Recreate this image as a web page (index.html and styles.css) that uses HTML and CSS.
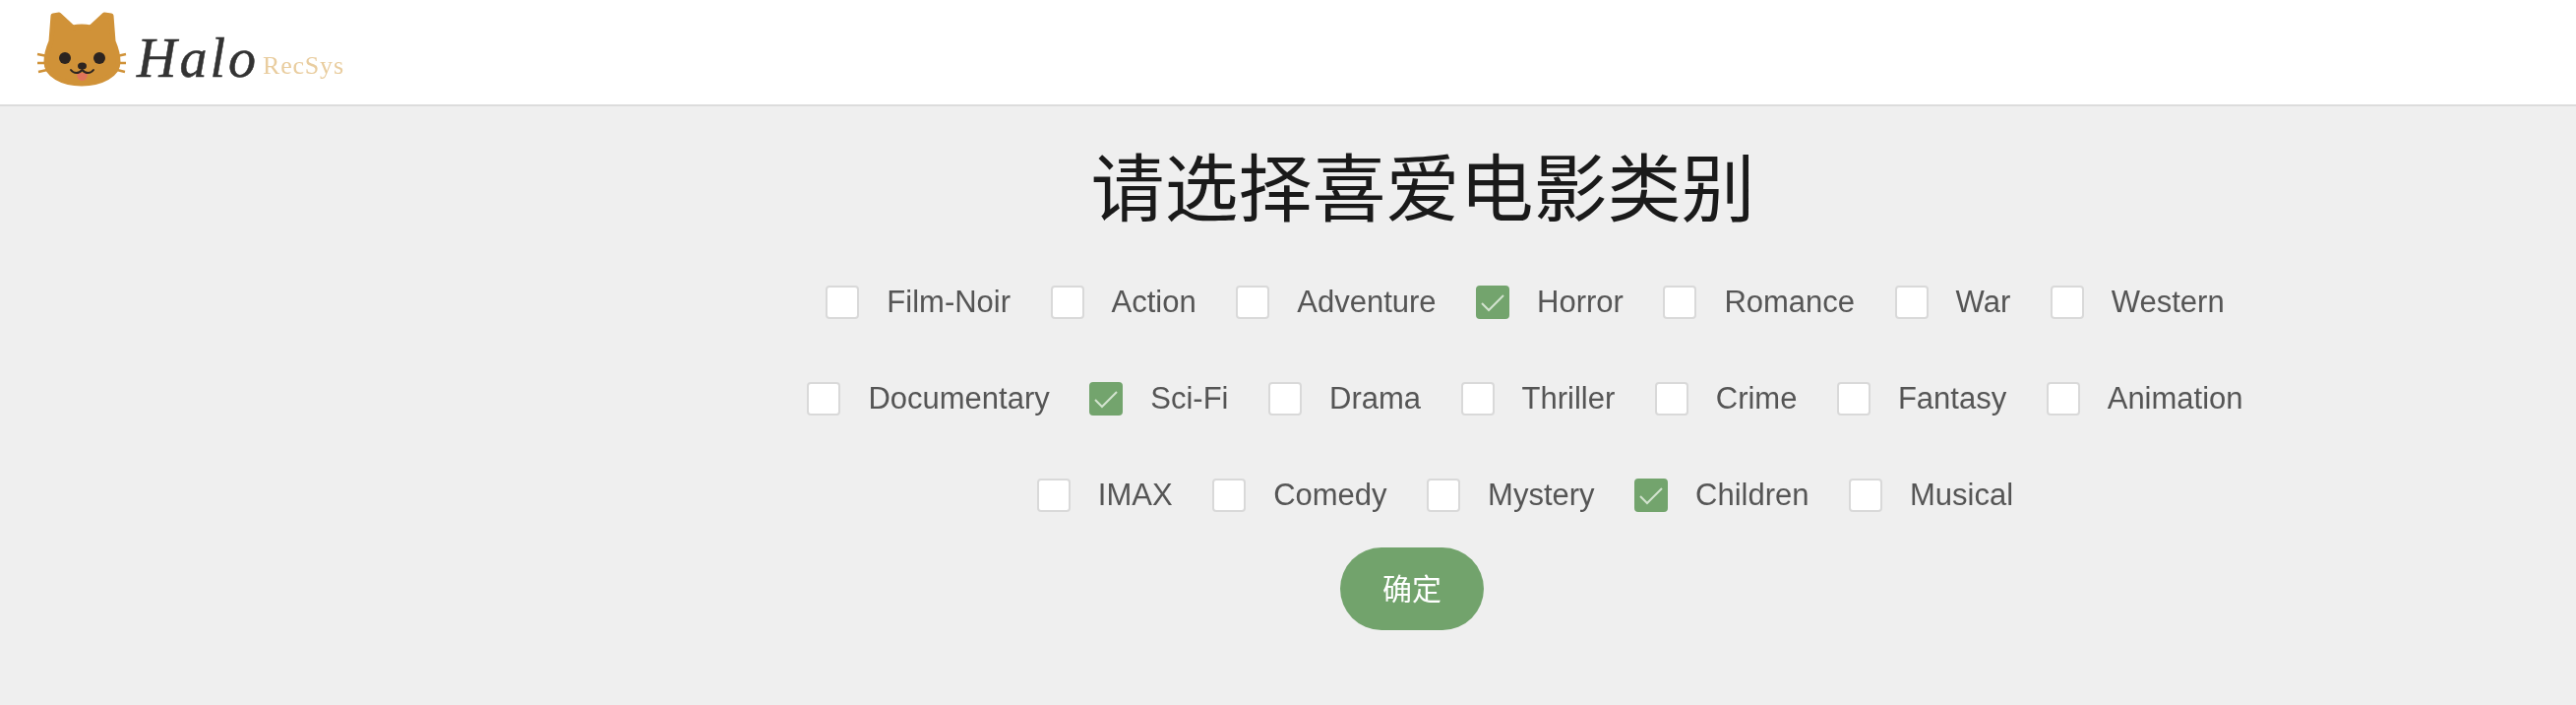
FILE: index.html
```html
<!DOCTYPE html>
<html lang="zh-CN">
<head>
<meta charset="utf-8">
<title>Halo RecSys</title>
<link rel="stylesheet" href="styles.css">
</head>
<body>
<header class="header">
  <div class="logo">
    <svg class="cat" viewBox="36 10 94 80" aria-hidden="true">
      <g class="whiskers">
        <path d="M38 55 L48 57 M38 64 L48 64 M39 73 L48 71 M119 57 L128 55 M119 64 L128 64 M119 71 L127 73"/>
      </g>
      <path class="face" d="M54 16 L60 15 L74 28 Q83 26 92 28 L106 15 L113 16 L115 42 C118 49 120 56 120 63 C120 76 103 85 83 85 C63 85 47 76 47 63 C47 56 49 49 52 42 Z"/>
      <circle class="dark" cx="66" cy="59" r="6"/>
      <circle class="dark" cx="101" cy="59" r="6"/>
      <ellipse class="dark" cx="83.500" cy="67" rx="4.500" ry="3.500"/>
      <path class="tongue" d="M78 74 H89 C89 80 86 82 83.500 82 C81 82 78 80 78 74 Z"/>
      <path class="mouth" d="M72 71 C75 75 80 75 83.500 71 C87 75 92 75 95 71"/>
    </svg>
    <span class="halo">Halo</span>
    <span class="recsys">RecSys</span>
  </div>
</header>
<main class="main">
  <h1 class="title">请选择喜爱电影类别</h1>
  <div class="genres">
    <div class="row">
      <label class="item"><span class="box"></span><span class="name">Film-Noir</span></label>
      <label class="item"><span class="box"></span><span class="name">Action</span></label>
      <label class="item"><span class="box"></span><span class="name">Adventure</span></label>
      <label class="item"><span class="box checked"><svg class="tick" viewBox="0 0 34 34"><path d="M6 18 L13 25 L28 10"/></svg></span><span class="name">Horror</span></label>
      <label class="item"><span class="box"></span><span class="name">Romance</span></label>
      <label class="item"><span class="box"></span><span class="name">War</span></label>
      <label class="item"><span class="box"></span><span class="name">Western</span></label>
    </div>
    <div class="row">
      <label class="item"><span class="box"></span><span class="name">Documentary</span></label>
      <label class="item"><span class="box checked"><svg class="tick" viewBox="0 0 34 34"><path d="M6 18 L13 25 L28 10"/></svg></span><span class="name">Sci-Fi</span></label>
      <label class="item"><span class="box"></span><span class="name">Drama</span></label>
      <label class="item"><span class="box"></span><span class="name">Thriller</span></label>
      <label class="item"><span class="box"></span><span class="name">Crime</span></label>
      <label class="item"><span class="box"></span><span class="name">Fantasy</span></label>
      <label class="item"><span class="box"></span><span class="name">Animation</span></label>
    </div>
    <div class="row">
      <label class="item"><span class="box"></span><span class="name">IMAX</span></label>
      <label class="item"><span class="box"></span><span class="name">Comedy</span></label>
      <label class="item"><span class="box"></span><span class="name">Mystery</span></label>
      <label class="item"><span class="box checked"><svg class="tick" viewBox="0 0 34 34"><path d="M6 18 L13 25 L28 10"/></svg></span><span class="name">Children</span></label>
      <label class="item"><span class="box"></span><span class="name">Musical</span></label>
    </div>
  </div>
  <div class="actions"><button class="confirm" type="button">确定</button></div>
</main>
</body>
</html>
```
FILE: styles.css
```css
html, body {
  margin: 0;
  height: 100%;
  background: #efefef;
}
body {
  font-family: "Liberation Sans", "Noto Sans CJK SC", sans-serif;
  overflow: hidden;
}
.header {
  height: 106px;
  background: #fff;
  border-bottom: 2px solid #dcdcdc;
  padding-left: 36px;
}
.logo {
  display: flex;
  align-items: flex-start;
  height: 106px;
  filter: blur(0.5px);
}
.cat {
  width: 94px;
  height: 80px;
  margin-top: 10px;
  flex: none;
}
.face {
  fill: #d09238;
  stroke: #d09238;
  stroke-width: 5;
  stroke-linejoin: round;
}
.dark { fill: #2c2420; }
.whiskers path { stroke: #d09238; stroke-width: 2.500; fill: none; }
.tongue { fill: #e0745a; }
.mouth { stroke: #2c2420; stroke-width: 2; fill: none; stroke-linecap: round; }
.halo {
  font-family: "Liberation Serif", serif;
  font-style: italic;
  font-size: 56px;
  line-height: 66px;
  letter-spacing: 3px;
  color: #333;
  -webkit-text-stroke: 0.5px #333;
  margin: 26px 0 0 9px;
}
.recsys {
  font-family: "Liberation Serif", serif;
  font-size: 26px;
  line-height: 28px;
  letter-spacing: 0.800px;
  color: #e9cd9f;
  margin: 53px 0 0 4px;
}
.main {
  filter: blur(0.4px);
}
.title {
  margin: 35px 0 15px;
  padding-left: 274px;
  font-size: 75px;
  line-height: 100px;
  font-weight: 400;
  color: #1a1a1a;
  text-align: center;
}
.genres {
  padding-left: 482px;
}
.row {
  display: flex;
  justify-content: center;
  align-items: center;
  gap: 40.500px;
  height: 98px;
}
.item {
  display: flex;
  align-items: center;
  gap: 28px;
}
.box {
  width: 34px;
  height: 34px;
  box-sizing: border-box;
  background: #fff;
  border: 2px solid #d9d9d9;
  border-radius: 4px;
  display: block;
}
.box.checked {
  background: #73a46d;
  border-color: #73a46d;
  position: relative;
}
.tick {
  position: absolute;
  inset: -2px;
  width: 34px;
  height: 34px;
}
.tick path {
  fill: none;
  stroke: #d3e3cf;
  stroke-width: 2;
}
.name {
  font-size: 31px;
  line-height: 34px;
  color: #555;
}
.actions {
  margin-top: 4px;
  padding-left: 252px;
  display: flex;
  justify-content: center;
}
.confirm {
  width: 146px;
  height: 84px;
  border: 0;
  border-radius: 42px;
  background: #72a36c;
  color: #fff;
  font-family: inherit;
  font-size: 30px;
  line-height: 1;
  padding: 2px 0 0;
}
```
